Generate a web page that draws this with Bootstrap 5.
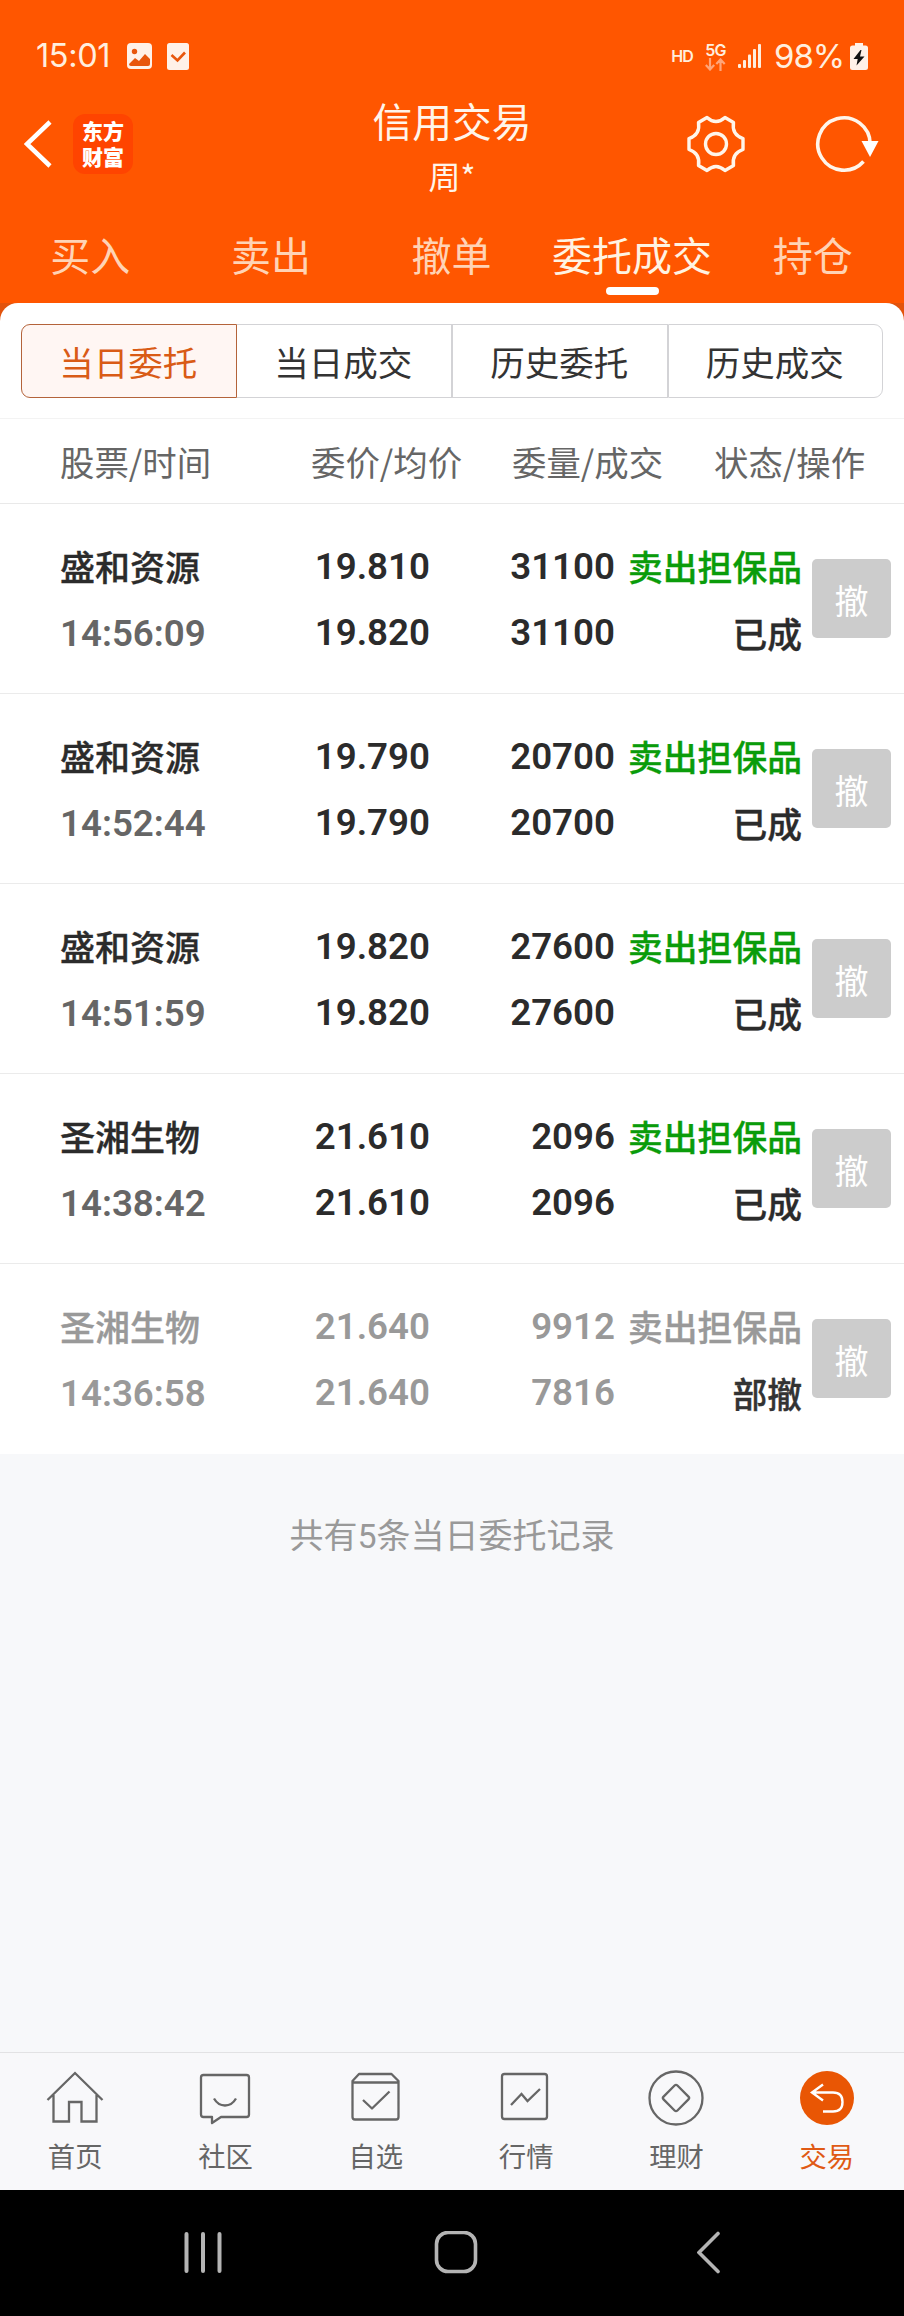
<!DOCTYPE html>
<html lang="zh-CN">
<head>
<meta charset="utf-8">
<meta name="viewport" content="width=device-width, initial-scale=1">
<title>信用交易</title>
<link href="https://cdn.jsdelivr.net/npm/bootstrap@5.3.0/dist/css/bootstrap.min.css" rel="stylesheet">
<style>
body{font-family:"Noto Sans CJK SC",sans-serif;background:#f7f8fa;color:#2b2b2b;height:2316px;overflow:hidden}
svg{display:block;flex:none}
.app-head{background:#ff5600;color:#fff5ea}
.status-bar{height:90px;padding:22px 36px 0 36px;font-family:Inter,sans-serif;color:#ffeede}
.clock{font-size:32.500px;line-height:68px;width:91px;letter-spacing:-.4px}
.tiny{font-size:16px;font-weight:600;line-height:16px}
.pct{font-size:33px;line-height:68px;letter-spacing:-1.1px}
.title-row{height:108px}
.side{width:300px}
.logo{width:60px;height:60px;border-radius:12px;background:#ff4400;color:#fff;font-size:21px;font-weight:900;line-height:26px;padding-top:3px;margin-left:21px}
.t1{font-size:39.8px;line-height:50px;padding-top:5px}
.t2{font-size:32px;line-height:40px;margin-top:10px}
.tabs{height:105px;padding:26px 1px 0 0;font-size:40px;line-height:60px;color:#ffd3b5}
.tabs .on{color:#fff3e2}
.tabs .on::after{content:"";display:block;width:53px;height:8px;border-radius:4px;background:#fff;margin:3px auto 0}
.curve{background:#e2530c}
.panel{background:#fff;border-radius:18px 18px 0 0;height:115px;padding:21px 21px 0}
.seg{height:74px;font-size:34.5px;line-height:72px;color:#333}
.seg>div{border:1px solid #d3d3d6;padding-right:1px}
.seg>div:first-child{border-color:#b4633a;background:#fff6f3;color:#d95b16;border-radius:9px 0 0 9px}
.seg>div:nth-child(2){border-left:0}
.seg>div:last-child{border-radius:0 9px 9px 0}
.heads{height:86px;background:#fff;border-top:1px solid #f3f3f3;border-bottom:1px solid #e9e9e9;font-size:34.4px;line-height:85px;color:#666;padding-left:60px;display:grid;grid-template-columns:251px 201px 202px 1fr}
.order{height:190px;background:#fff;border-bottom:1px solid #ebebeb;padding:30px 13px 0 60px;font-size:35px;font-weight:500;line-height:66px}
.order:last-of-type{border-bottom-color:#fff}
.c1{width:180px}.c2{width:190px}.c3{width:185px}.c4{width:187px}
.han{line-height:63px;height:66px;-webkit-text-stroke:.35px currentColor}
.c4 .han{font-size:34.8px;line-height:64px}
.c4 .st{line-height:66px}
.num{font-family:Roboto,sans-serif;font-weight:600;font-size:36.7px}
.time{color:#666;line-height:67px}
.sell{color:#0a9c0a}
.gone,.gone .time,.gone .sell{color:#999}
.gone .st{color:#333}
.cancel{width:79px;height:79px;border-radius:5px;background:#ccc;color:#fff;font-size:34px;font-weight:400;line-height:81px;margin:25px 0 0 10px;padding:0;border:0}
.total{height:598px;padding-top:50px;font-size:34px;line-height:60px;color:#999}
.total span{font-family:Roboto,sans-serif}
.foot{height:138px;border-top:1px solid #e2e2e4;background:#f8f8fa;font-size:27.3px;line-height:40px;color:#666;padding:15px 2px 0 0}
.foot svg{margin:0 auto 7px}
.foot .on{color:#e05a14}
.sys{height:126px;background:#000;padding:0 183px 0 182px}
.sys svg:nth-child(2){margin-right:10px}
</style>
</head>
<body>
<header class="app-head">
  <div class="status-bar d-flex align-items-center">
    <div class="clock">15:01</div>
    <svg width="25" height="26" viewBox="0 0 25 26"><rect width="25" height="26" rx="4" fill="#fff1e8"/><circle cx="7.500" cy="8.500" r="2.700" fill="#e8560c"/><path d="M2 21l6-6 4 3 6-7 5 5v5q0 2-2 2H4q-2 0-2-2z" fill="#e8560c"/></svg>
    <svg style="margin-left:15px" width="22" height="27" viewBox="0 0 22 27"><rect width="22" height="27" rx="2.500" fill="#fff1e8"/><path d="M4.500 12l6 5.500 7.500-8" fill="none" stroke="#e8560c" stroke-width="2.600"/></svg>
    <div class="tiny ms-auto" style="letter-spacing:-.8px">HD</div>
    <div class="tiny ms-2 ps-1 text-center" style="letter-spacing:-.7px">5G
      <svg width="21" height="13" viewBox="0 0 21 13" fill="none" stroke="#ffa57a" stroke-width="2.200"><path d="M5 0v11M.8 7L5 11.500 9.200 7M15.500 13V2M11.300 6l4.200-4.500L19.700 6"/></svg>
    </div>
    <svg class="ms-2 me-2 ps-1" width="32" height="25" viewBox="0 0 28 25" fill="#ffeede"><rect y="20" width="3" height="4" rx="1"/><rect x="5" y="16" width="3" height="8" rx="1"/><rect x="10" y="10.500" width="3" height="13.500" rx="1"/><rect x="15" y="5" width="3" height="19" rx="1"/><rect x="20" width="3" height="24" rx="1"/></svg>
    <div class="pct">98%</div>
    <svg style="margin-left:6px" width="18" height="27" viewBox="0 0 18 27"><path d="M5 0h8v2.500h2.500q2.500 0 2.500 2.500v19.500q0 2.500-2.500 2.500h-13Q0 27 0 24.500V5q0-2.500 2.500-2.500H5z" fill="#fff1e8"/><path d="M10.500 7L3.500 16h4.200L6.500 22.500 14.500 13.500H10l1.500-6.500z" fill="#111"/></svg>
  </div>
  <div class="title-row d-flex justify-content-between">
    <div class="side d-flex align-items-center">
      <svg class="ms-4" width="28" height="50" viewBox="0 0 28 50"><path d="M26 3L3 25l23 22" fill="none" stroke="#fff" stroke-width="4.500"/></svg>
      <div class="logo text-center"><div>东方</div><div>财富</div></div>
    </div>
    <div class="text-center">
      <div class="t1">信用交易</div>
      <div class="t2">周*</div>
    </div>
    <div class="side d-flex align-items-center justify-content-end">
      <svg width="60" height="60" viewBox="-30 -30 60 60" fill="none" stroke="#fff5ea" stroke-width="3.400" stroke-linejoin="round"><circle r="10.500"/><path d="M-9-26.500Q0-18.500 9-26.500L17.500-21.500Q15.500-9.500 27-5.500V5.500Q15.500 9.500 17.500 21.500L9 26.500Q0 18.500-9 26.500L-17.500 21.500Q-15.500 9.500-27 5.500V-5.500Q-15.500-9.500-17.500-21.500Z"/></svg>
      <svg style="margin:0 24px 0 68px" width="66" height="60" viewBox="-30 -30 66 60"><path d="M26.200 0A26.200 26.200 0 1 0 19.500 17.500" fill="none" stroke="#fff5ea" stroke-width="3.600"/><path d="M17.500-3h17L26 13z" fill="#fff"/></svg>
    </div>
  </div>
  <nav class="tabs row row-cols-5 g-0 text-center">
    <div class="col">买入</div><div class="col">卖出</div><div class="col">撤单</div><div class="col on">委托成交</div><div class="col">持仓</div>
  </nav>
</header>
<main>
  <div class="curve"><div class="panel">
    <div class="seg row row-cols-4 g-0 text-center">
      <div class="col">当日委托</div><div class="col">当日成交</div><div class="col">历史委托</div><div class="col">历史成交</div>
    </div>
  </div></div>
  <div class="heads"><div>股票/时间</div><div>委价/均价</div><div>委量/成交</div><div>状态/操作</div></div>
  <section>
    <div class="order d-flex">
      <div class="c1"><div class="han">盛和资源</div><div class="num time">14:56:09</div></div>
      <div class="c2 num text-end">19.810<br>19.820</div>
      <div class="c3 num text-end">31100<br>31100</div>
      <div class="c4 text-end"><div class="han sell">卖出担保品</div><div class="han st">已成</div></div>
      <button class="cancel">撤</button>
    </div>
    <div class="order d-flex">
      <div class="c1"><div class="han">盛和资源</div><div class="num time">14:52:44</div></div>
      <div class="c2 num text-end">19.790<br>19.790</div>
      <div class="c3 num text-end">20700<br>20700</div>
      <div class="c4 text-end"><div class="han sell">卖出担保品</div><div class="han st">已成</div></div>
      <button class="cancel">撤</button>
    </div>
    <div class="order d-flex">
      <div class="c1"><div class="han">盛和资源</div><div class="num time">14:51:59</div></div>
      <div class="c2 num text-end">19.820<br>19.820</div>
      <div class="c3 num text-end">27600<br>27600</div>
      <div class="c4 text-end"><div class="han sell">卖出担保品</div><div class="han st">已成</div></div>
      <button class="cancel">撤</button>
    </div>
    <div class="order d-flex">
      <div class="c1"><div class="han">圣湘生物</div><div class="num time">14:38:42</div></div>
      <div class="c2 num text-end">21.610<br>21.610</div>
      <div class="c3 num text-end">2096<br>2096</div>
      <div class="c4 text-end"><div class="han sell">卖出担保品</div><div class="han st">已成</div></div>
      <button class="cancel">撤</button>
    </div>
    <div class="order gone d-flex">
      <div class="c1"><div class="han">圣湘生物</div><div class="num time">14:36:58</div></div>
      <div class="c2 num text-end">21.640<br>21.640</div>
      <div class="c3 num text-end">9912<br>7816</div>
      <div class="c4 text-end"><div class="han sell">卖出担保品</div><div class="han st">部撤</div></div>
      <button class="cancel">撤</button>
    </div>
  </section>
  <div class="total text-center">共有<span>5</span>条当日委托记录</div>
</main>
<nav class="foot row row-cols-6 g-0 text-center">
  <div class="col"><svg width="60" height="60" viewBox="-30 -30 60 60" fill="none" stroke="#666" stroke-width="2.300"><path d="M-27.500 2L0-25 27.500 2M-21.500-3V23.500H-6V4H6.500V23.500H21.500V-3"/></svg>首页</div>
  <div class="col"><svg width="60" height="60" viewBox="-30 -30 60 60" fill="none" stroke="#666" stroke-width="2.300"><path d="M-21.500-23h43q2.500 0 2.500 2.500v37q0 2.500-2.500 2.500H-4L-13 25V19h-8.500q-2.500 0-2.500-2.500v-37q0-2.500 2.500-2.500zM-11 .500q4 7 11 7t11-7" stroke-linejoin="round"/></svg>社区</div>
  <div class="col"><svg width="60" height="60" viewBox="-30 -30 60 60" fill="none" stroke="#666" stroke-width="2.300"><path d="M-23.500-17L-17-24H15.500L22.500-17V19q0 2.500-2.500 2.500h-41q-2.500 0-2.500-2.500zM-23.500-15.500h46M-13 2L-4 10.500 13.500-6.500" stroke-linejoin="round"/></svg>自选</div>
  <div class="col"><svg width="60" height="60" viewBox="-30 -30 60 60" fill="none" stroke="#666" stroke-width="2.300"><rect x="-24" y="-24" width="45" height="45" rx="2.500"/><path d="M-15 7L-4.500-4 1.500 3 14-9"/></svg>行情</div>
  <div class="col"><svg width="60" height="60" viewBox="-30 -30 60 60" fill="none" stroke="#666" stroke-width="2.300"><circle r="26.500"/><rect x="-9.800" y="-9.800" width="19.600" height="19.600" rx="2" transform="rotate(45)"/></svg>理财</div>
  <div class="col on"><svg width="60" height="60" viewBox="-30 -30 60 60" fill="none" stroke="#fff" stroke-width="2.400"><circle r="27" fill="#e95604" stroke="none"/><path d="M-4-13.500L-15-5.500-4 2.500M-15-5.500H6q9.500 0 9.500 9.500T6 13.500H-4"/></svg>交易</div>
</nav>
<footer class="sys d-flex justify-content-between align-items-center">
  <svg width="42" height="42" viewBox="-21 -21 42 42" stroke="#b4b4b4" stroke-width="4" stroke-linecap="round"><path d="M-16.500-19V18M0-19V18M16.500-19V18"/></svg>
  <svg width="44" height="44" viewBox="-22 -22 44 44"><rect x="-19.500" y="-20.500" width="39" height="39" rx="11.500" fill="none" stroke="#b4b4b4" stroke-width="3.600"/></svg>
  <svg width="24" height="44" viewBox="0 -22 24 44"><path d="M21-19.500L2-.500 21 18.500" fill="none" stroke="#b4b4b4" stroke-width="3.600" stroke-linecap="round"/></svg>
</footer>
<script src="https://cdn.jsdelivr.net/npm/bootstrap@5.3.0/dist/js/bootstrap.bundle.min.js"></script>
</body>
</html>
